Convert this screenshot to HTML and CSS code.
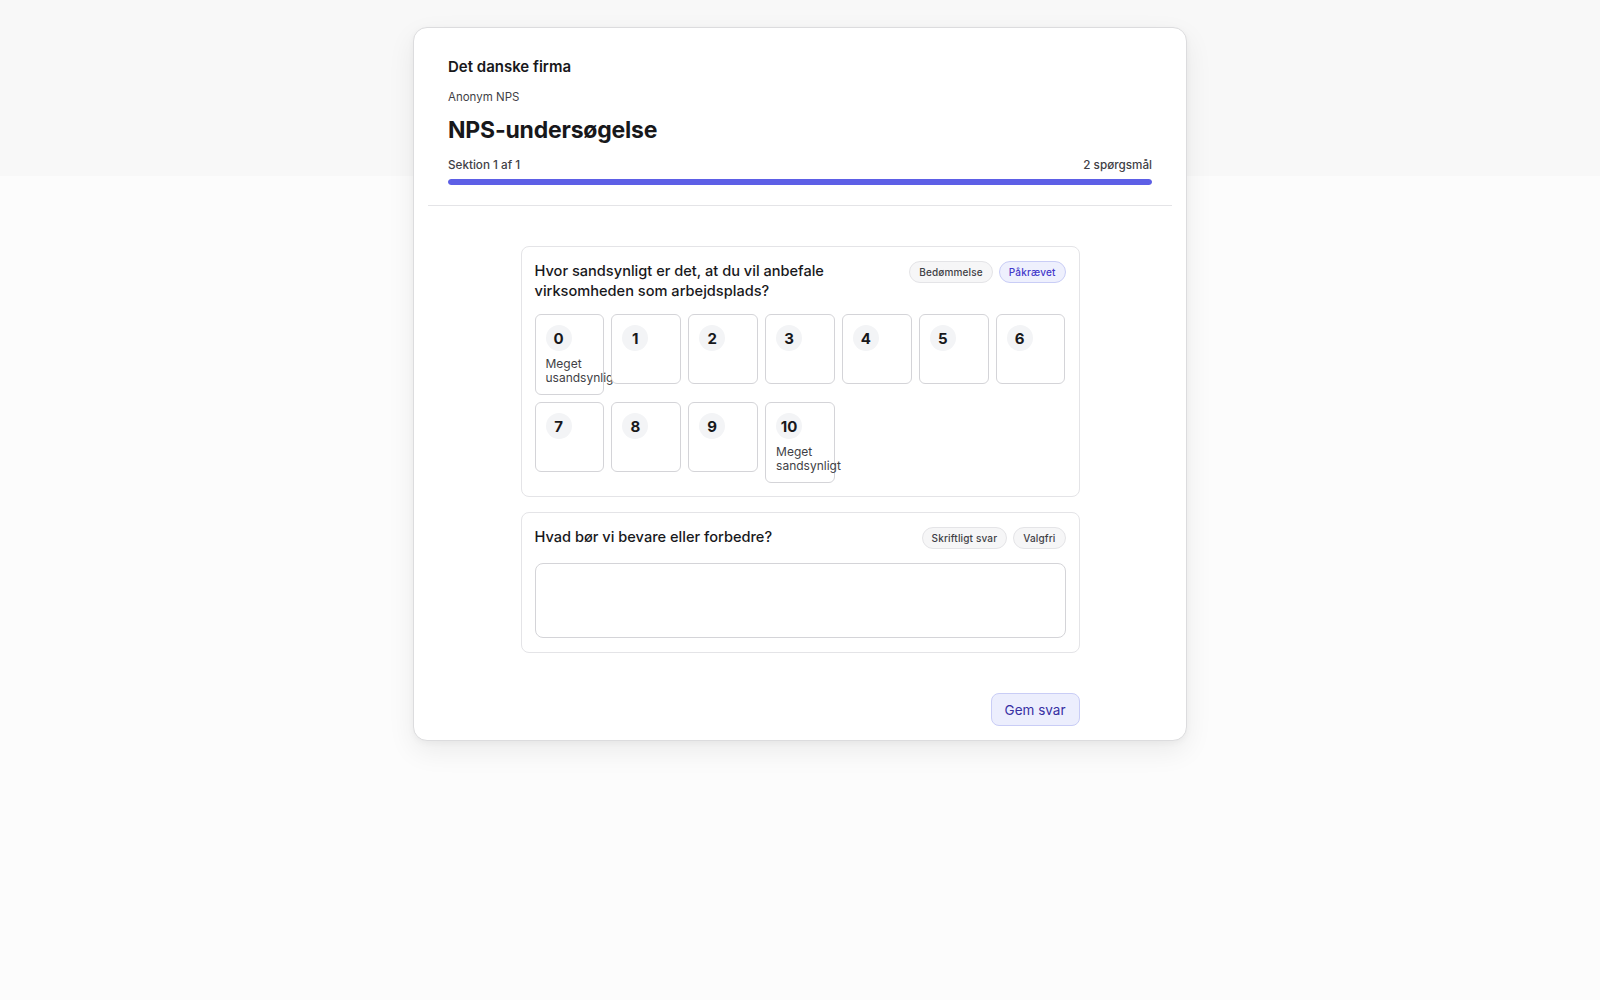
FILE: index.html
```html
<!DOCTYPE html>
<html lang="da">
<head>
<meta charset="utf-8">
<title>NPS-undersøgelse</title>
<link rel="stylesheet" href="styles.css">
</head>
<body>
<div class="band"></div>
<main class="page">
  <section class="survey">
    <header class="survey-head">
      <div class="company">Det danske firma</div>
      <div class="kind">Anonym NPS</div>
      <h1 class="title">NPS-undersøgelse</h1>
      <div class="progress-meta"><span>Sektion 1 af 1</span><span>2 spørgsmål</span></div>
      <div class="progress"><div class="progress-fill" style="width:100%"></div></div>
    </header>
    <div class="divider"></div>
    <div class="questions">
      <div class="q-card">
        <div class="q-head">
          <div class="q-text">Hvor sandsynligt er det, at du vil anbefale virksomheden som arbejdsplads?</div>
          <div class="badges"><span class="badge">Bedømmelse</span><span class="badge badge-req">Påkrævet</span></div>
        </div>
        <div class="scale">
          <div class="tile"><span class="num">0</span><span class="lbl">Meget usandsynligt</span></div>
          <div class="tile"><span class="num">1</span></div>
          <div class="tile"><span class="num">2</span></div>
          <div class="tile"><span class="num">3</span></div>
          <div class="tile"><span class="num">4</span></div>
          <div class="tile"><span class="num">5</span></div>
          <div class="tile"><span class="num">6</span></div>
          <div class="tile"><span class="num">7</span></div>
          <div class="tile"><span class="num">8</span></div>
          <div class="tile"><span class="num">9</span></div>
          <div class="tile"><span class="num">10</span><span class="lbl">Meget sandsynligt</span></div>
        </div>
      </div>
      <div class="q-card">
        <div class="q-head">
          <div class="q-text">Hvad bør vi bevare eller forbedre?</div>
          <div class="badges"><span class="badge">Skriftligt svar</span><span class="badge">Valgfri</span></div>
        </div>
        <textarea class="answer"></textarea>
      </div>
    </div>
    <div class="actions"><button class="save">Gem svar</button></div>
  </section>
</main>
</body>
</html>
```

FILE: styles.css
```css
* { box-sizing: border-box; }
html, body { margin: 0; padding: 0; }
body {
  background: #fcfcfc;
  font-family: Inter, "Noto Sans", "Liberation Sans", sans-serif;
  color: #18181b;
  min-height: 1000px;
  position: relative;
}
.band {
  position: absolute;
  left: 0; top: 0; right: 0;
  height: 176px;
  background: #f8f8f8;
}
.page {
  position: relative;
  padding-top: 27px;
  display: flex;
  justify-content: center;
}
.survey {
  width: 774px;
  background: #fff;
  border: 1px solid #dcdcde;
  border-radius: 14px;
  padding: 14px;
  box-shadow: 0 10px 28px rgba(0,0,0,0.07), 0 2px 6px rgba(0,0,0,0.04);
}
.survey-head {
  padding: 15px 20px 20px;
}
.company {
  font-size: 15px;
  font-weight: 600;
  line-height: 20px;
}
.kind {
  margin-top: 12px;
  font-size: 11.5px;
  line-height: 16px;
  color: #3f3f46;
}
.title {
  margin: 10px 0 0;
  font-size: 23px;
  line-height: 30px;
  font-weight: 700;
  letter-spacing: -0.2px;
}
.progress-meta {
  margin-top: 12px;
  display: flex;
  justify-content: space-between;
  font-size: 11.7px;
  line-height: 16px;
  font-weight: 500;
  color: #3f3f46;
}
.progress {
  margin-top: 6px;
  height: 6px;
  border-radius: 3px;
  background: #e7e7ee;
  overflow: hidden;
}
.progress-fill {
  height: 100%;
  background: #5d5fe6;
  border-radius: 3px;
}
.divider {
  height: 1px;
  background: #e4e4e7;
}
.questions {
  width: 559px;
  margin: 40px auto 0;
  display: flex;
  flex-direction: column;
  gap: 15px;
}
.q-card {
  border: 1px solid #e4e4e7;
  border-radius: 8px;
  padding: 13px;
  background: #fff;
}
.q-head {
  display: flex;
  justify-content: space-between;
  align-items: flex-start;
  gap: 16px;
}
.q-text {
  font-size: 14.6px;
  line-height: 19.5px;
  font-weight: 500;
  max-width: 310px;
  padding-top: 2px;
}
.badges {
  display: flex;
  gap: 6px;
  flex-shrink: 0;
  padding-top: 1px;
}
.badge {
  display: inline-flex;
  align-items: center;
  height: 22px;
  padding: 0 9px;
  border-radius: 11px;
  border: 1px solid #e4e4e7;
  background: #f6f6f7;
  font-size: 10px;
  font-weight: 500;
  color: #3f3f46;
  letter-spacing: 0.15px;
}
.badge-req {
  background: #eef0fd;
  border-color: #c9cdf6;
  color: #4338ca;
}
.scale {
  margin-top: 13px;
  display: grid;
  grid-template-columns: repeat(7, 1fr);
  gap: 7px;
  align-items: start;
}
.tile {
  min-height: 70px;
  border: 1px solid #d4d4d8;
  border-radius: 6px;
  padding: 10px 10px;
  display: flex;
  flex-direction: column;
  align-items: flex-start;
  background: #fff;
}
.num {
  width: 26px;
  height: 26px;
  border-radius: 50%;
  background: #f3f4f6;
  display: flex;
  align-items: center;
  justify-content: center;
  font-size: 15px;
  font-weight: 700;
}
.lbl {
  margin-top: 6px;
  font-size: 12px;
  line-height: 13.5px;
  color: #3f3f46;
  width: 0;
  min-width: 100%;
  overflow: visible;
}
.answer {
  display: block;
  width: 100%;
  height: 75px;
  margin: 14px 0 1px;
  border: 1px solid #d4d4d8;
  border-radius: 8px;
  resize: none;
  background: #fff;
  font-family: inherit;
  font-size: 14px;
}
.actions {
  width: 559px;
  margin: 40px auto 0;
  display: flex;
  justify-content: flex-end;
}
.save {
  height: 33px;
  padding: 0 13px;
  border-radius: 8px;
  border: 1px solid #c9cdf6;
  background: #eceefd;
  color: #3730a3;
  font-family: inherit;
  font-size: 13.5px;
  font-weight: 400;
}
```
